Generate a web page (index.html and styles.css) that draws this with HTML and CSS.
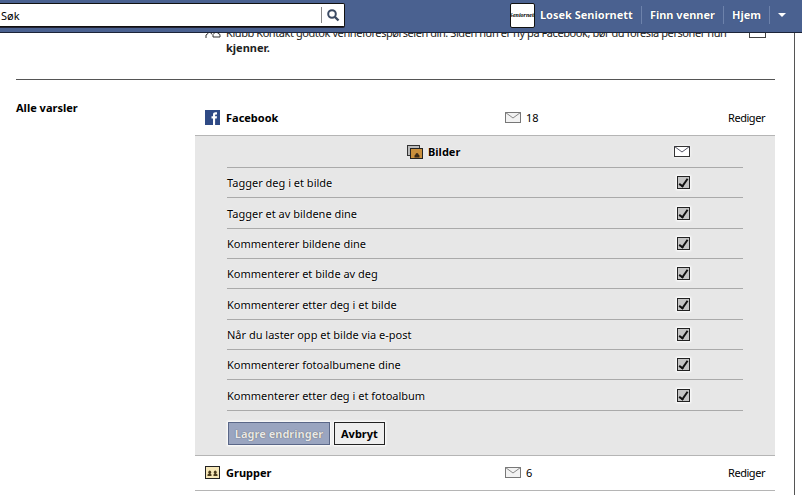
FILE: index.html
```html
<!DOCTYPE html>
<html lang="nb">
<head>
    <meta charset="UTF-8">
    <title>Varsler</title>
    <link rel="stylesheet" href="styles.css">
</head>
<body>

<!-- Top bar -->
<div class="topbar">
    <div class="search">
        <span class="search-text">Søk</span>
        <span class="search-btn">
            <svg width="14" height="14" viewBox="0 0 14 14"><circle cx="6" cy="6" r="3.800" fill="none" stroke="#3b4a63" stroke-width="2"/><path d="M9 9l3.500 3.500" stroke="#3b4a63" stroke-width="2.400"/></svg>
        </span>
    </div>
    <div class="nav">
        <span class="avatar"><span class="avatar-text">Seniornett</span></span>
        <a class="nav-link nav-name">Losek Seniornett</a>
        <a class="nav-link">Finn venner</a>
        <a class="nav-link">Hjem</a>
        <span class="nav-arrow"></span>
    </div>
</div>

<div class="page">
    <!-- Old notification, scrolled under the top bar -->
    <div class="notice">
        <svg class="notice-icon" width="16" height="14" viewBox="0 0 16 14"><path d="M1 13V10l2-1.500V6h3v2.500l1 .5M8 12V9.500L9.500 8V4.500h3V8L15 9.500V12z" fill="#fff" stroke="#333"/></svg>
        <p>Klubb Kontakt godtok venneforespørselen din. Siden hun er ny på Facebook, bør du foreslå personer hun <b>kjenner.</b></p>
        <span class="notice-close"></span>
    </div>

    <div class="section">
        <h3 class="section-title">Alle varsler</h3>
        <div class="apps">
            <!-- Facebook -->
            <div class="app-row">
                <svg class="app-icon" width="15" height="15" viewBox="0 0 15 15"><rect width="15" height="15" fill="#2f4a85"/><path d="M8 15V8.500H6.500V6.200H8V4.800C8 3 9 2.300 10.500 2.300h1.500v2.200h-1c-.7 0-.9.300-.9.900v.8h1.900l-.3 2.300h-1.600V15z" fill="#fff"/></svg>
                <span class="app-name">Facebook</span>
                <span class="app-count">
                    <svg width="16" height="11" viewBox="0 0 16 11"><rect x=".5" y=".5" width="15" height="10" fill="#f2f2f2" stroke="#777"/><path d="M.5.500L8 6l7.500-5.500" fill="none" stroke="#888"/></svg>
                    18
                </span>
                <a class="edit">Rediger</a>
            </div>

            <!-- Open panel -->
            <div class="panel">
                <div class="panel-head">
                    <span class="panel-title">
                        <svg width="16" height="14" viewBox="0 0 16 14"><rect x=".5" y=".5" width="12" height="10" fill="#bbb" stroke="#333"/><rect x="3.500" y="3.500" width="12" height="10" fill="#c98f3c" stroke="#222"/><path d="M7.500 12.500v-2l1-1a1.500 1.500 0 1 1 3 0l1 1v2z" fill="#3a2a18"/></svg>
                        Bilder
                    </span>
                    <span class="panel-mail">
                        <svg width="16" height="11" viewBox="0 0 16 11"><rect x=".5" y=".5" width="15" height="10" fill="#fff" stroke="#333"/><path d="M.5.500L8 6l7.500-5.500" fill="none" stroke="#556"/></svg>
                    </span>
                </div>
                <div class="opt"><span>Tagger deg i et bilde</span><span class="check"></span></div>
                <div class="opt"><span>Tagger et av bildene dine</span><span class="check"></span></div>
                <div class="opt"><span>Kommenterer bildene dine</span><span class="check"></span></div>
                <div class="opt"><span>Kommenterer et bilde av deg</span><span class="check"></span></div>
                <div class="opt"><span>Kommenterer etter deg i et bilde</span><span class="check"></span></div>
                <div class="opt"><span>Når du laster opp et bilde via e-post</span><span class="check"></span></div>
                <div class="opt"><span>Kommenterer fotoalbumene dine</span><span class="check"></span></div>
                <div class="opt"><span>Kommenterer etter deg i et fotoalbum</span><span class="check"></span></div>
                <div class="buttons">
                    <button class="btn btn-save">Lagre endringer</button>
                    <button class="btn">Avbryt</button>
                </div>
            </div>

            <!-- Grupper -->
            <div class="app-row">
                <svg class="app-icon" width="15" height="13" viewBox="0 0 15 13"><rect x=".5" y=".5" width="14" height="12" fill="#f6e7b8" stroke="#222"/><path d="M2.500 10V8.500l1.500-1a1.500 1.500 0 1 1 1.500 0l1 1V10zM8.500 10V8.500l1-1a1.500 1.500 0 1 1 1.500 0l1.500 1V10z" fill="#4a3b1c"/></svg>
                <span class="app-name">Grupper</span>
                <span class="app-count">
                    <svg width="16" height="11" viewBox="0 0 16 11"><rect x=".5" y=".5" width="15" height="10" fill="#f2f2f2" stroke="#777"/><path d="M.5.500L8 6l7.500-5.500" fill="none" stroke="#888"/></svg>
                    6
                </span>
                <a class="edit">Rediger</a>
            </div>
        </div>
    </div>
</div>

<div class="scroll-edge"></div>

</body>
</html>
```

FILE: styles.css
```css
html, body {
    height: 100%;
}
body {
    margin: 0;
    background-color: #fff;
    color: #000;
    font-family: Tahoma, "Noto Sans", sans-serif;
    font-size: 11px;
    overflow: hidden;
}
a {
    color: inherit;
}

/* top bar */
.topbar {
    position: relative;
    z-index: 2;
    display: flex;
    justify-content: space-between;
    align-items: center;
    box-sizing: border-box;
    height: 33px;
    padding-bottom: 2px;
    background-color: #4a6190;
    border-bottom: 1px solid #1c2438;
}
.search {
    display: flex;
    justify-content: space-between;
    align-items: center;
    box-sizing: border-box;
    width: 345px;
    height: 24px;
    padding-left: 1px;
    background-color: #fff;
    border: 1px solid #111;
    border-left: none;
    border-radius: 0 2px 2px 0;
    box-shadow: 0 1px 0 #223;
}
.search-btn {
    display: flex;
    align-items: center;
    justify-content: center;
    width: 22px;
    height: 16px;
    border-left: 1px solid #888;
}
.nav {
    display: flex;
    align-items: center;
    padding-right: 16px;
}
.avatar {
    display: flex;
    align-items: center;
    justify-content: center;
    overflow: hidden;
    box-sizing: border-box;
    width: 25px;
    height: 25px;
    background-color: #fff;
    border: 1px solid #111;
    border-radius: 2px;
}
.avatar-text {
    font-family: "Liberation Serif", serif;
    font-size: 6px;
    font-style: italic;
    font-weight: bold;
}
.nav-link {
    padding: 2px 8px;
    border-right: 1px solid #6d82ab;
    color: #fff;
    font-weight: bold;
    line-height: 14px;
    text-shadow: 0 0 1px #12203f;
}
.nav-name {
    padding-left: 5px;
}
.nav-arrow {
    width: 0;
    height: 0;
    margin-left: 8px;
    border-top: 4px solid #fff;
    border-left: 4px solid transparent;
    border-right: 4px solid transparent;
}

/* page */
.page {
    box-sizing: border-box;
    width: 775px;
    padding-left: 16px;
}
.notice {
    display: flex;
    height: 54px;
    padding-left: 189px;
    border-bottom: 1px solid #555;
    margin-top: -8px;
    line-height: 15px;
}
.notice-icon {
    flex: none;
    margin-right: 5px;
}
.notice p {
    width: 513px;
    margin: 0;
    color: #222;
    letter-spacing: -0.43px;
}
.notice b {
    letter-spacing: 0;
}
.notice-close {
    flex: none;
    box-sizing: border-box;
    width: 17px;
    height: 12px;
    margin: 1px 0 0 10px;
    border: 1px solid #444;
}
.section {
    display: flex;
    padding-top: 21px;
}
.section-title {
    width: 179px;
    margin: 0;
    font-size: 11px;
    line-height: 14px;
}
.apps {
    flex: 1;
}
.app-row {
    display: flex;
    align-items: center;
    height: 32px;
    padding: 0 10px 2px;
    border-bottom: 1px solid #b5b5b5;
}
.app-icon {
    margin-right: 6px;
}
.app-name {
    width: 279px;
    font-weight: bold;
}
.app-count {
    display: flex;
    align-items: center;
    gap: 5px;
    flex: 1;
}
.edit {
    letter-spacing: -0.45px;
}

/* open panel */
.panel {
    box-sizing: border-box;
    height: 320px;
    padding: 0 32px;
    background-color: #e7e7e7;
    border-bottom: 1px solid #b5b5b5;
    text-shadow: 0 0 2px #fff, 0 0 1px #fff;
}
.panel-head {
    display: flex;
    align-items: center;
    height: 31px;
    border-bottom: 1px solid #aaa;
}
.panel-title {
    display: flex;
    align-items: center;
    gap: 5px;
    margin-left: 180px;
    font-weight: bold;
}
.panel-mail {
    display: flex;
    margin-left: 214px;
    background-color: #fff;
    box-shadow: 0 0 3px #fff;
}
.opt {
    display: flex;
    justify-content: space-between;
    align-items: center;
    box-sizing: border-box;
    height: 30.35px;
    padding-right: 53px;
    border-bottom: 1px solid #aaa;
}
.check {
    position: relative;
    box-sizing: border-box;
    width: 13px;
    height: 13px;
    background-color: #c4c4c4;
    border: 1px solid #222;
    box-shadow: 0 0 2px 1px #fff;
}
.check::after {
    content: "";
    position: absolute;
    left: 3px;
    top: 0;
    width: 3px;
    height: 8px;
    border-right: 2px solid #111;
    border-bottom: 2px solid #111;
    transform: rotate(35deg);
}
.buttons {
    display: flex;
    gap: 4px;
    padding: 11px 0 0 1px;
}
.btn {
    box-sizing: border-box;
    height: 23px;
    padding: 0 6px;
    background-color: #eee;
    border: 1px solid #222;
    box-shadow: 0 0 2px 1px #fff;
    font-family: inherit;
    font-size: 11px;
    font-weight: bold;
    color: #000;
}
.btn-save {
    width: 102px;
    padding: 0;
    background-color: #9aa5c0;
    border-color: #5a6788;
    color: #e8e8e8;
    white-space: nowrap;
    text-shadow: 0 0 1px #444;
}

.scroll-edge {
    position: absolute;
    top: 33px;
    bottom: 0;
    left: 794px;
    width: 1px;
    background-color: #555;
}
```
